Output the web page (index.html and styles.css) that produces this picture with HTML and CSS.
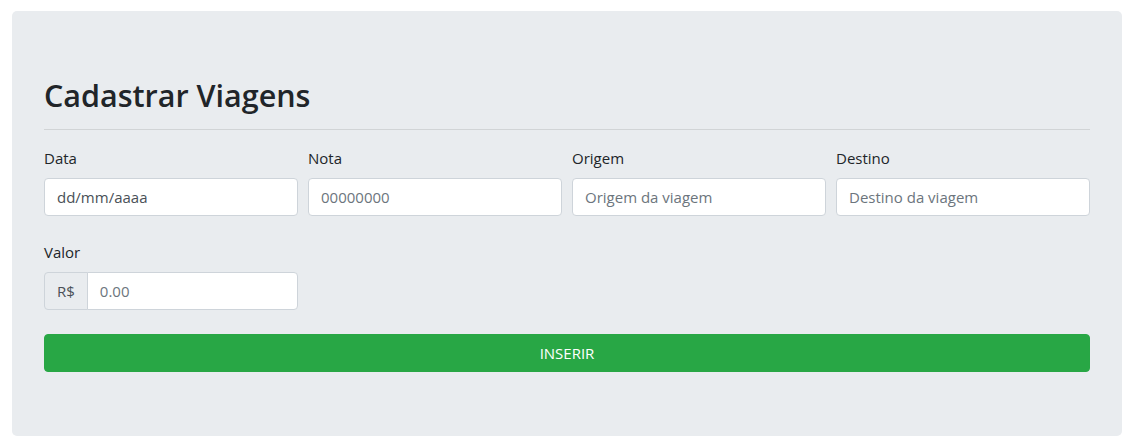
FILE: index.html
```html
<!DOCTYPE html>
<html lang="pt-BR">
<head>
<meta charset="utf-8">
<title>Cadastrar Viagens</title>
<link rel="stylesheet" href="styles.css">
</head>
<body>
<div class="page">
  <div class="jumbotron">
    <h1 class="title">Cadastrar Viagens</h1>
    <hr class="divider">
    <form class="form">
      <div class="row">
        <div class="field">
          <label class="label">Data</label>
          <div class="input value">dd/mm/aaaa</div>
        </div>
        <div class="field">
          <label class="label">Nota</label>
          <div class="input placeholder">00000000</div>
        </div>
        <div class="field">
          <label class="label">Origem</label>
          <div class="input placeholder">Origem da viagem</div>
        </div>
        <div class="field">
          <label class="label">Destino</label>
          <div class="input placeholder">Destino da viagem</div>
        </div>
      </div>
      <div class="row">
        <div class="field">
          <label class="label">Valor</label>
          <div class="input-group">
            <span class="prepend">R$</span>
            <div class="input group-input placeholder">0.00</div>
          </div>
        </div>
      </div>
      <button type="button" class="btn">INSERIR</button>
    </form>
  </div>
</div>
</body>
</html>
```
FILE: styles.css
```css
* { box-sizing: border-box; }
html, body { margin: 0; padding: 0; background: #fff; }
body {
  font-family: "Open Sans", "Noto Sans", sans-serif;
  font-size: 16px;
  line-height: 1.5;
  color: #212529;
}
.page { padding: 11px 14px 12px 12px; }
.jumbotron {
  width: 1110px;
  background: #e9ecef;
  border-radius: 5px;
  padding: 64px 32px;
}
.title {
  margin: 2px 0 8px;
  font-size: 30.5px;
  font-weight: 600;
  line-height: 36px;
  color: #212529;
}
.divider {
  margin: 16px 0;
  border: 0;
  border-top: 1px solid rgba(0,0,0,.1);
  height: 0;
}
.row {
  display: grid;
  grid-template-columns: repeat(4, 1fr);
  column-gap: 10px;
  margin-bottom: 24px;
}
.field { display: flex; flex-direction: column; }
.label {
  font-size: 15px;
  line-height: 24px;
  margin-bottom: 8px;
}
.input {
  height: 38px;
  padding: 6px 12px;
  font-size: 15px;
  line-height: 24px;
  background: #fff;
  border: 1px solid #ced4da;
  border-radius: 4px;
  white-space: nowrap;
  overflow: hidden;
}
.value { color: #495057; }
.placeholder { color: #6c757d; }
.input-group { display: flex; height: 38px; }
.prepend {
  padding: 6px 12px;
  font-size: 15px;
  line-height: 24px;
  color: #495057;
  background: #e9ecef;
  border: 1px solid #ced4da;
  border-radius: 4px 0 0 4px;
}
.group-input {
  flex: 1;
  margin-left: -1px;
  border-radius: 0 4px 4px 0;
}
.btn {
  display: block;
  width: 100%;
  height: 38px;
  padding: 6px 12px;
  font-family: inherit;
  font-size: 15px;
  line-height: 24px;
  color: #fff;
  background: #28a745;
  border: 1px solid #28a745;
  border-radius: 4px;
}
```
